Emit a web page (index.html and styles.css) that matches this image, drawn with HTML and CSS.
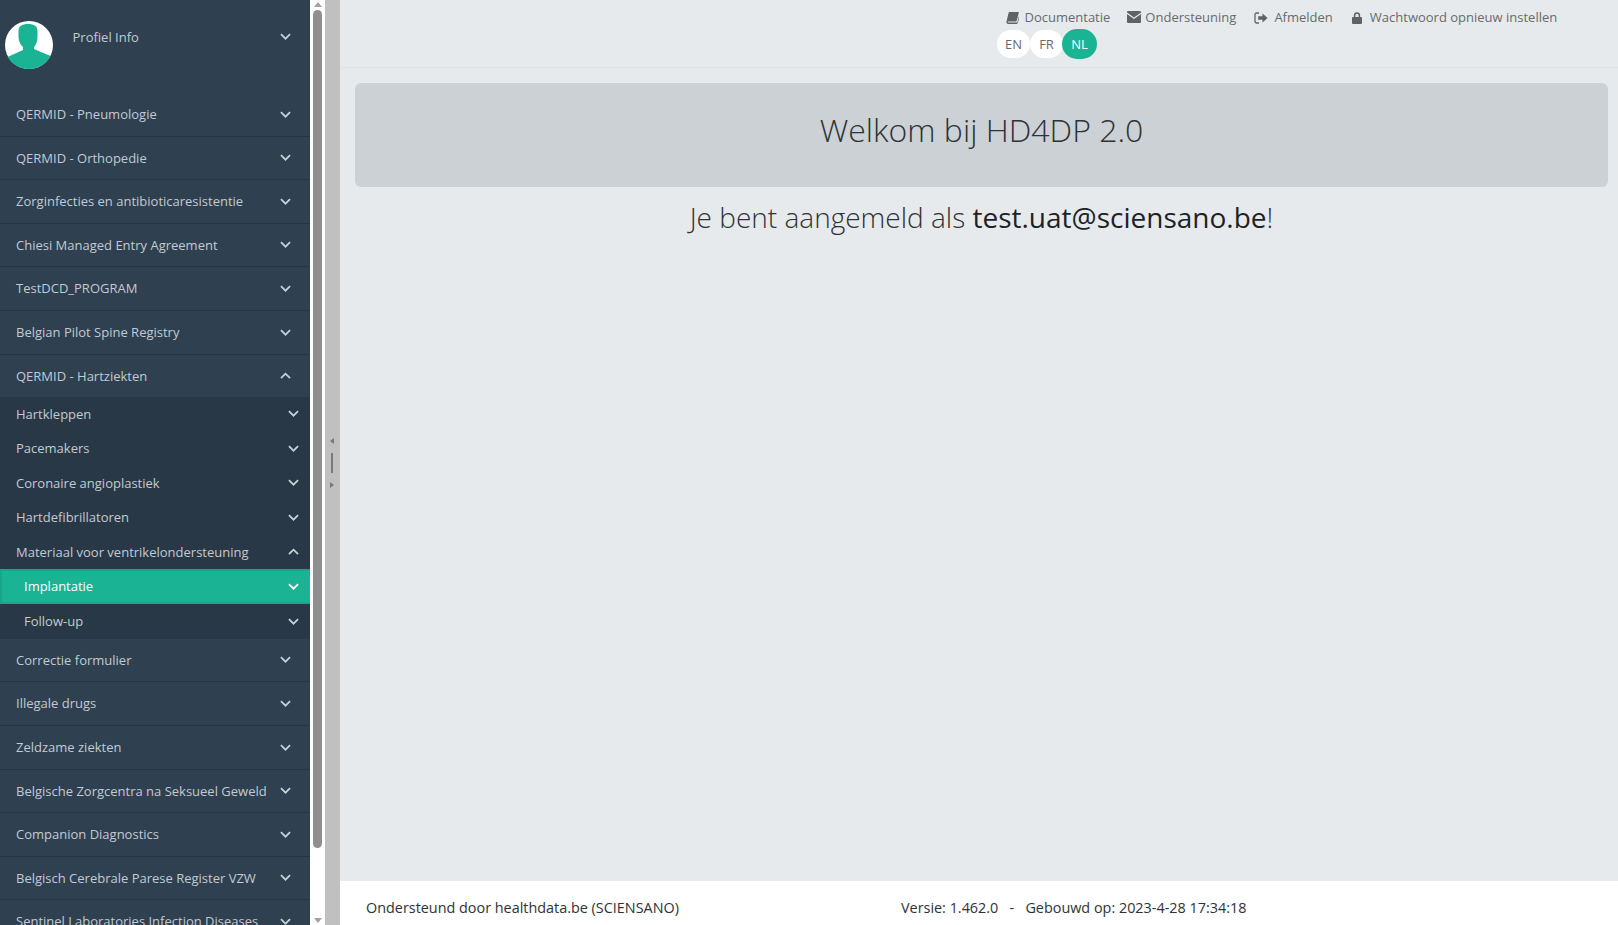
FILE: index.html
```html
<!DOCTYPE html>
<html lang="nl">
<head>
<meta charset="utf-8">
<title>HD4DP 2.0</title>
<link rel="stylesheet" href="styles.css">
</head>
<body>
<svg class="defs" width="0" height="0" aria-hidden="true">
  <symbol id="down" viewBox="0 0 12 8"><path d="M1 1.200 6 6.200 11 1.200" fill="none" stroke="currentColor" stroke-width="1.900"/></symbol>
  <symbol id="up" viewBox="0 0 12 8"><path d="M1 6.800 6 1.800 11 6.800" fill="none" stroke="currentColor" stroke-width="1.900"/></symbol>
</svg>
<div class="app">
  <aside class="sidebar">
    <nav class="nav">
      <div class="profile">
        <svg class="avatar" viewBox="0 0 48 48">
          <circle cx="24" cy="24" r="24" fill="#fff"/>
          <path d="M13.500 10C13.500 5 17 3 23 3s9.500 2 9.500 7v6c0 4-1.500 8-3.500 10v2l16.500 7A24 24 0 0 1 24 48 24 24 0 0 1 2.500 36L18 29v-3c-2.500-2-4.500-6-4.500-10Z" fill="#1ab394"/>
        </svg>
        <span class="profile-name">Profiel Info</span>
        <svg class="chev"><use href="#down"/></svg>
      </div>
      <a class="item"><span>QERMID - Pneumologie</span><svg class="chev"><use href="#down"/></svg></a>
      <a class="item"><span>QERMID - Orthopedie</span><svg class="chev"><use href="#down"/></svg></a>
      <a class="item"><span>Zorginfecties en antibioticaresistentie</span><svg class="chev"><use href="#down"/></svg></a>
      <a class="item"><span>Chiesi Managed Entry Agreement</span><svg class="chev"><use href="#down"/></svg></a>
      <a class="item"><span>TestDCD_PROGRAM</span><svg class="chev"><use href="#down"/></svg></a>
      <a class="item"><span>Belgian Pilot Spine Registry</span><svg class="chev"><use href="#down"/></svg></a>
      <a class="item open"><span>QERMID - Hartziekten</span><svg class="chev"><use href="#up"/></svg></a>
      <div class="sub">
        <a class="sub-item"><span>Hartkleppen</span><svg class="chev"><use href="#down"/></svg></a>
        <a class="sub-item"><span>Pacemakers</span><svg class="chev"><use href="#down"/></svg></a>
        <a class="sub-item"><span>Coronaire angioplastiek</span><svg class="chev"><use href="#down"/></svg></a>
        <a class="sub-item"><span>Hartdefibrillatoren</span><svg class="chev"><use href="#down"/></svg></a>
        <a class="sub-item"><span>Materiaal voor ventrikelondersteuning</span><svg class="chev"><use href="#up"/></svg></a>
        <a class="sub-item deep active"><span>Implantatie</span><svg class="chev"><use href="#down"/></svg></a>
        <a class="sub-item deep"><span>Follow-up</span><svg class="chev"><use href="#down"/></svg></a>
      </div>
      <a class="item"><span>Correctie formulier</span><svg class="chev"><use href="#down"/></svg></a>
      <a class="item"><span>Illegale drugs</span><svg class="chev"><use href="#down"/></svg></a>
      <a class="item"><span>Zeldzame ziekten</span><svg class="chev"><use href="#down"/></svg></a>
      <a class="item"><span>Belgische Zorgcentra na Seksueel Geweld</span><svg class="chev"><use href="#down"/></svg></a>
      <a class="item"><span>Companion Diagnostics</span><svg class="chev"><use href="#down"/></svg></a>
      <a class="item"><span>Belgisch Cerebrale Parese Register VZW</span><svg class="chev"><use href="#down"/></svg></a>
      <a class="item"><span>Sentinel Laboratories Infection Diseases</span><svg class="chev"><use href="#down"/></svg></a>
    </nav>
    <div class="scrollbar">
      <i class="arrow arrow-up"></i>
      <div class="track"><div class="thumb"></div></div>
      <i class="arrow arrow-down"></i>
    </div>
  </aside>
  <div class="splitter">
    <i class="tri tri-left"></i>
    <i class="grip"></i>
    <i class="tri tri-right"></i>
  </div>
  <main class="main">
    <header class="topbar">
      <div class="links">
        <a class="link link-doc">
          <svg class="ico ico-book" viewBox="0 0 14 14"><path d="M3.600 1h9.600c.5 0 .7.400.6.800l-2.200 8.400c-.2.700-.5 1-1.200 1H2.600c-.5 0-.8.200-.7.600s.4.600.9.600h8.800c.4 0 .6-.2.700-.5l2-7.600.6.400-2.200 8.300c-.1.500-.6.900-1.100.9H2.400C1.200 13.900.4 13 .5 11.900c0-.3.100-.7.200-1L2.800 1.800c.1-.5.400-.8.800-.8Z"/></svg>
          Documentatie</a>
        <a class="link link-help">
          <svg class="ico ico-wide" viewBox="0 0 14 12"><path d="M.9 0h12.200c.5 0 .9.400.9.900v.6L7 6.400 0 1.500V.9C0 .4.400 0 .9 0ZM0 3l7 5 7-5v8.100c0 .5-.4.900-.9.900H.9a.9.900 0 0 1-.9-.9Z"/></svg>
          Ondersteuning</a>
        <a class="link link-out">
          <svg class="ico ico-out" viewBox="0 0 14 12"><path d="M5 1H2.400C1.600 1 1 1.600 1 2.400v7.200c0 .8.600 1.400 1.400 1.400H5" fill="none" stroke="currentColor" stroke-width="1.300"/><path d="M8.500 1.600 13.600 6 8.500 10.400V7.800H4.200V4.200h4.300Z"/></svg>
          Afmelden</a>
        <a class="link link-lock">
          <svg class="ico ico-lock" viewBox="0 0 10 12"><path d="M2.600 5V3.400a2.400 2.400 0 0 1 4.800 0V5" fill="none" stroke="currentColor" stroke-width="1.500"/><rect y="5" width="10" height="7" rx="1"/></svg>
          Wachtwoord opnieuw instellen</a>
      </div>
      <div class="langs">
        <a class="lang">EN</a>
        <a class="lang lang-fr">FR</a>
        <a class="lang lang-on">NL</a>
      </div>
    </header>
    <section class="content">
      <div class="jumbo"><h1>Welkom bij HD4DP 2.0</h1></div>
      <h2 class="who">Je bent aangemeld als <strong>test.uat@sciensano.be</strong>!</h2>
    </section>
    <footer class="footer">
      <span class="by">Ondersteund door healthdata.be (SCIENSANO)</span>
      <span class="ver">Versie: 1.462.0 &nbsp;&nbsp;-&nbsp;&nbsp; Gebouwd op: 2023-4-28 17:34:18</span>
    </footer>
  </main>
</div>
</body>
</html>
```
FILE: styles.css
```css
* { box-sizing: border-box; }
html, body { margin: 0; height: 100%; overflow: hidden; }
body { font-family: "Open Sans", sans-serif; font-size: 13px; line-height: 1.42857; color: #676a6c; background: #e7eaec; }
.defs { position: absolute; }
.app { display: flex; height: 925px; }

.sidebar { display: flex; width: 325px; flex: none; background: #fff; }
.nav { width: 310px; flex: none; background: #2f4050; overflow: hidden; color: #c2cad3; }
.chev { width: 11px; height: 7.300px; flex: none; color: #c9d0d6; }

.profile { display: flex; height: 93.150px; padding: 21px 19px 0 5px; align-items: flex-start; }
.avatar { width: 48px; height: 48px; flex: none; }
.profile-name { flex: 1; margin: 7px 0 0 19.500px; }
.profile .chev { margin-top: 12px; }

.item { display: flex; justify-content: space-between; align-items: center; padding: 12px 19px 12px 16px; border-bottom: 1px solid #263544; }
.item.open { border-bottom: 0; padding-bottom: 11.500px; }
.sub { background: #293846; padding-bottom: .3px; }
.sub-item { display: flex; justify-content: space-between; align-items: center; padding: 8px 11.500px 8px 16px; }
.deep { padding-left: 24px; }
.active { background: #1ab394; color: #fff; border: 2px solid #18a689; border-right: 0; padding: 6px 11.500px 6px 22px; }
.active .chev { color: #fff; }

.scrollbar { width: 15px; flex: none; display: flex; flex-direction: column; align-items: center; padding: 2px 0; }
.track { flex: 1; width: 9px; padding: 3px 0 70px; }
.thumb { height: 100%; background: #8f8f8f; border-radius: 5px; }
.arrow { width: 0; height: 0; border-left: 4px solid transparent; border-right: 4px solid transparent; }
.arrow-up { border-bottom: 5px solid #a3a3a3; }
.arrow-down { border-top: 5px solid #a3a3a3; }

.splitter { width: 15px; flex: none; background: #c0c0c0; display: flex; flex-direction: column; align-items: center; justify-content: center; gap: 9px; padding-right: 1px; }
.grip { width: 2px; height: 20px; background: #757a80; }
.tri { width: 0; height: 0; border-top: 3px solid transparent; border-bottom: 3px solid transparent; }
.tri-left { border-right: 4px solid #757a80; }
.tri-right { border-left: 4px solid #757a80; }

.main { flex: 1; min-width: 0; display: flex; flex-direction: column; background: #e7eaec; }
.topbar { height: 68px; flex: none; padding: 7px 0 0 657px; border-bottom: 1px solid #dfe3e6; }
.links { display: flex; align-items: center; height: 20px; white-space: nowrap; margin-left: 9px; }
.link { display: flex; align-items: center; margin-right: 19px; }
.link-doc { margin-right: 17px; }
.link-help { margin-right: 18px; }
.link-out, .link-lock { margin-top: 1px; }
.ico { fill: currentColor; color: #5f6366; flex: none; }
.ico-book { width: 13px; height: 13px; margin-right: 5.500px; }
.ico-wide { width: 14px; height: 12px; margin-right: 4px; }
.ico-out { width: 14px; height: 12px; margin-right: 6px; }
.ico-lock { width: 10px; height: 12px; margin-right: 8px; }
.langs { display: flex; align-items: center; margin-top: 2px; }
.lang { width: 33px; height: 28px; background: #fff; border-radius: 14px; display: flex; align-items: center; justify-content: center; }
.lang-fr { margin-right: -1px; }
.lang-on { width: 35px; height: 30px; background: #1ab394; color: #fff; border-radius: 15px; }

.content { flex: 1; padding: 15px 10px 0 15px; }
.jumbo { height: 104px; padding-bottom: 10px; background: #ccd1d5; border-radius: 6px; display: flex; align-items: center; justify-content: center; }
h1 { margin: 0; font-size: 32px; font-weight: 300; color: #2f3336; }
.who { margin: 11px 0 0; text-align: center; font-size: 28px; font-weight: 300; color: #2f3336; }
.who strong { font-weight: 400; color: #1f2225; }

.footer { height: 45px; flex: none; background: #fff; border-top: 1px solid #e7eaec; padding: 17px 0 0 26px; display: flex; font-size: 14.400px; color: #2f3336; }
.by { width: 535px; }
```
